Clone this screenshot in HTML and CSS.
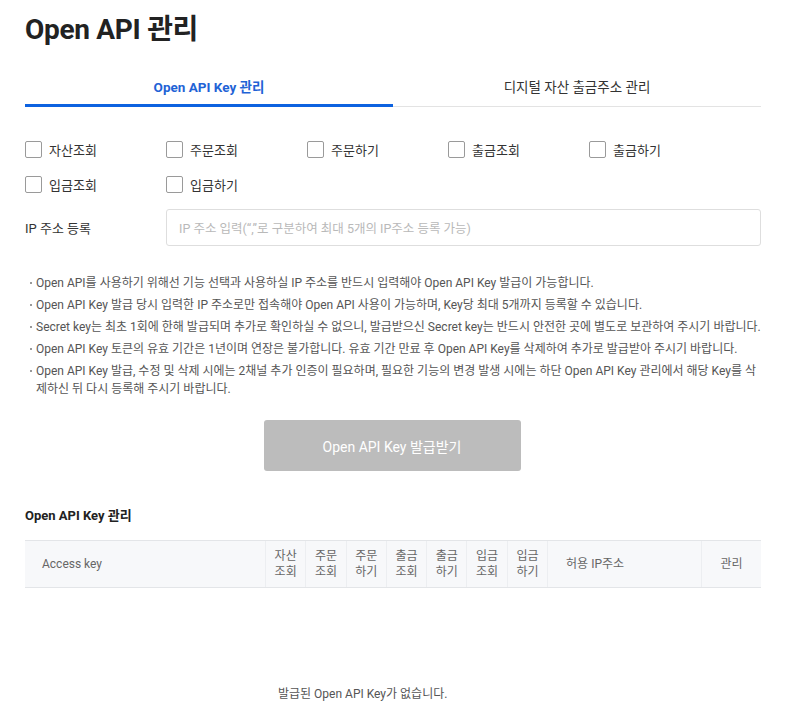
FILE: index.html
```html
<!DOCTYPE html>
<html lang="ko">
<head>
<meta charset="utf-8">
<title>Open API 관리</title>
<link rel="stylesheet" href="styles.css">
</head>
<body>
<div class="page">
  <h1 class="title">Open API 관리</h1>

  <div class="tabs">
    <div class="tab active">Open API Key 관리</div>
    <div class="tab">디지털 자산 출금주소 관리</div>
  </div>

  <div class="perms">
    <label class="perm"><span class="box"></span>자산조회</label>
    <label class="perm"><span class="box"></span>주문조회</label>
    <label class="perm"><span class="box"></span>주문하기</label>
    <label class="perm"><span class="box"></span>출금조회</label>
    <label class="perm"><span class="box"></span>출금하기</label>
    <label class="perm"><span class="box"></span>입금조회</label>
    <label class="perm"><span class="box"></span>입금하기</label>
  </div>

  <div class="ip-row">
    <div class="ip-label">IP 주소 등록</div>
    <div class="ip-input">IP 주소 입력(“,”로 구분하여 최대 5개의 IP주소 등록 가능)</div>
  </div>

  <ul class="notes">
    <li>Open API를 사용하기 위해선 기능 선택과 사용하실 IP 주소를 반드시 입력해야 Open API Key 발급이 가능합니다.</li>
    <li>Open API Key 발급 당시 입력한 IP 주소로만 접속해야 Open API 사용이 가능하며, Key당 최대 5개까지 등록할 수 있습니다.</li>
    <li>Secret key는 최초 1회에 한해 발급되며 추가로 확인하실 수 없으니, 발급받으신 Secret key는 반드시 안전한 곳에 별도로 보관하여 주시기 바랍니다.</li>
    <li>Open API Key 토큰의 유효 기간은 1년이며 연장은 불가합니다. 유효 기간 만료 후 Open API Key를 삭제하여 추가로 발급받아 주시기 바랍니다.</li>
    <li>Open API Key 발급, 수정 및 삭제 시에는 2채널 추가 인증이 필요하며, 필요한 기능의 변경 발생 시에는 하단 Open API Key 관리에서 해당 Key를 삭제하신 뒤 다시 등록해 주시기 바랍니다.</li>
  </ul>

  <div class="btn-wrap">
    <div class="btn">Open API Key 발급받기</div>
  </div>

  <h2 class="sub-title">Open API Key 관리</h2>

  <div class="table-head">
    <div class="th th-key">Access key</div>
    <div class="th th-s">자산<br>조회</div>
    <div class="th th-s">주문<br>조회</div>
    <div class="th th-s">주문<br>하기</div>
    <div class="th th-s">출금<br>조회</div>
    <div class="th th-s">출금<br>하기</div>
    <div class="th th-s">입금<br>조회</div>
    <div class="th th-s">입금<br>하기</div>
    <div class="th th-ip">허용 IP주소</div>
    <div class="th th-manage">관리</div>
  </div>

  <div class="empty">발급된 Open API Key가 없습니다.</div>
</div>
</body>
</html>
```

FILE: styles.css
```css
* { box-sizing: border-box; }
html, body { margin: 0; padding: 0; background: #fff; }
body {
  font-family: Roboto, "Noto Sans CJK KR", sans-serif;
  color: #333;
}
.page {
  width: 736px;
  margin-left: 25px;
  padding-top: 13px;
}
.title {
  margin: 0;
  font-size: 28px;
  line-height: 34px;
  font-weight: 700;
  color: #222;
  letter-spacing: -0.3px;
}
.tabs {
  display: flex;
  margin-top: 21px;
  border-bottom: 1px solid #e3e3e3;
}
.tab {
  flex: 1;
  text-align: center;
  font-size: 13.5px;
  line-height: 18px;
  padding: 10px 0 10px;
  color: #333;
}
.tab.active {
  color: #1f63d6;
  font-weight: 700;
  border-bottom: 3px solid #0d62e0;
  margin-bottom: -1px;
  padding-bottom: 8px;
}
.perms {
  display: grid;
  grid-template-columns: repeat(5, 141px);
  row-gap: 17px;
  margin-top: 33px;
}
.perm {
  display: flex;
  align-items: center;
  height: 18px;
  font-size: 13px;
  color: #333;
}
.box {
  width: 17px;
  height: 17px;
  border: 1px solid #9a9a9a;
  border-radius: 2px;
  margin-right: 7px;
  background: #fff;
  flex: none;
}
.ip-row {
  display: flex;
  align-items: center;
  margin-top: 16px;
}
.ip-label {
  width: 141px;
  font-size: 13px;
  color: #333;
}
.ip-input {
  flex: 1;
  height: 37px;
  border: 1px solid #dedede;
  border-radius: 3px;
  padding: 0 12px;
  display: flex;
  align-items: center;
  font-size: 12.5px;
  color: #b9b9b9;
}
.notes {
  list-style: none;
  margin: 28px 0 0;
  padding: 0;
}
.notes li {
  position: relative;
  padding-left: 11px;
  font-size: 12px;
  line-height: 18px;
  color: #555;
  margin-bottom: 4px;
}
.notes li::before {
  content: "";
  position: absolute;
  left: 5px;
  top: 8px;
  width: 2px;
  height: 2px;
  background: #999;
}
.btn-wrap {
  display: flex;
  justify-content: center;
  margin-top: 22px;
}
.btn {
  width: 257px;
  height: 51px;
  background: #bcbcbc;
  border-radius: 3px;
  color: #fff;
  font-size: 14px;
  display: flex;
  align-items: center;
  justify-content: center;
  margin-right: 2px;
}
.sub-title {
  margin: 36px 0 0;
  font-size: 13px;
  line-height: 18px;
  font-weight: 700;
  color: #222;
}
.table-head {
  display: flex;
  margin-top: 15px;
  background: #f7f8fa;
  border-top: 1px solid #e3e5e8;
  border-bottom: 1px solid #e3e5e8;
  height: 48px;
}
.th {
  display: flex;
  align-items: center;
  justify-content: center;
  text-align: center;
  font-size: 12px;
  line-height: 16.5px;
  color: #666;
  border-left: 1px solid #eceef1;
}
.th-key {
  width: 240px;
  justify-content: flex-start;
  padding-left: 17px;
  border-left: none;
}
.th-s { width: 40.3px; }
.th-ip { width: 154px; justify-content: flex-start; padding-left: 18px; }
.th-manage { flex: 1; }
.empty {
  margin-top: 98px;
  padding-left: 253px;
  font-size: 12px;
  line-height: 16px;
  color: #555;
}
```
